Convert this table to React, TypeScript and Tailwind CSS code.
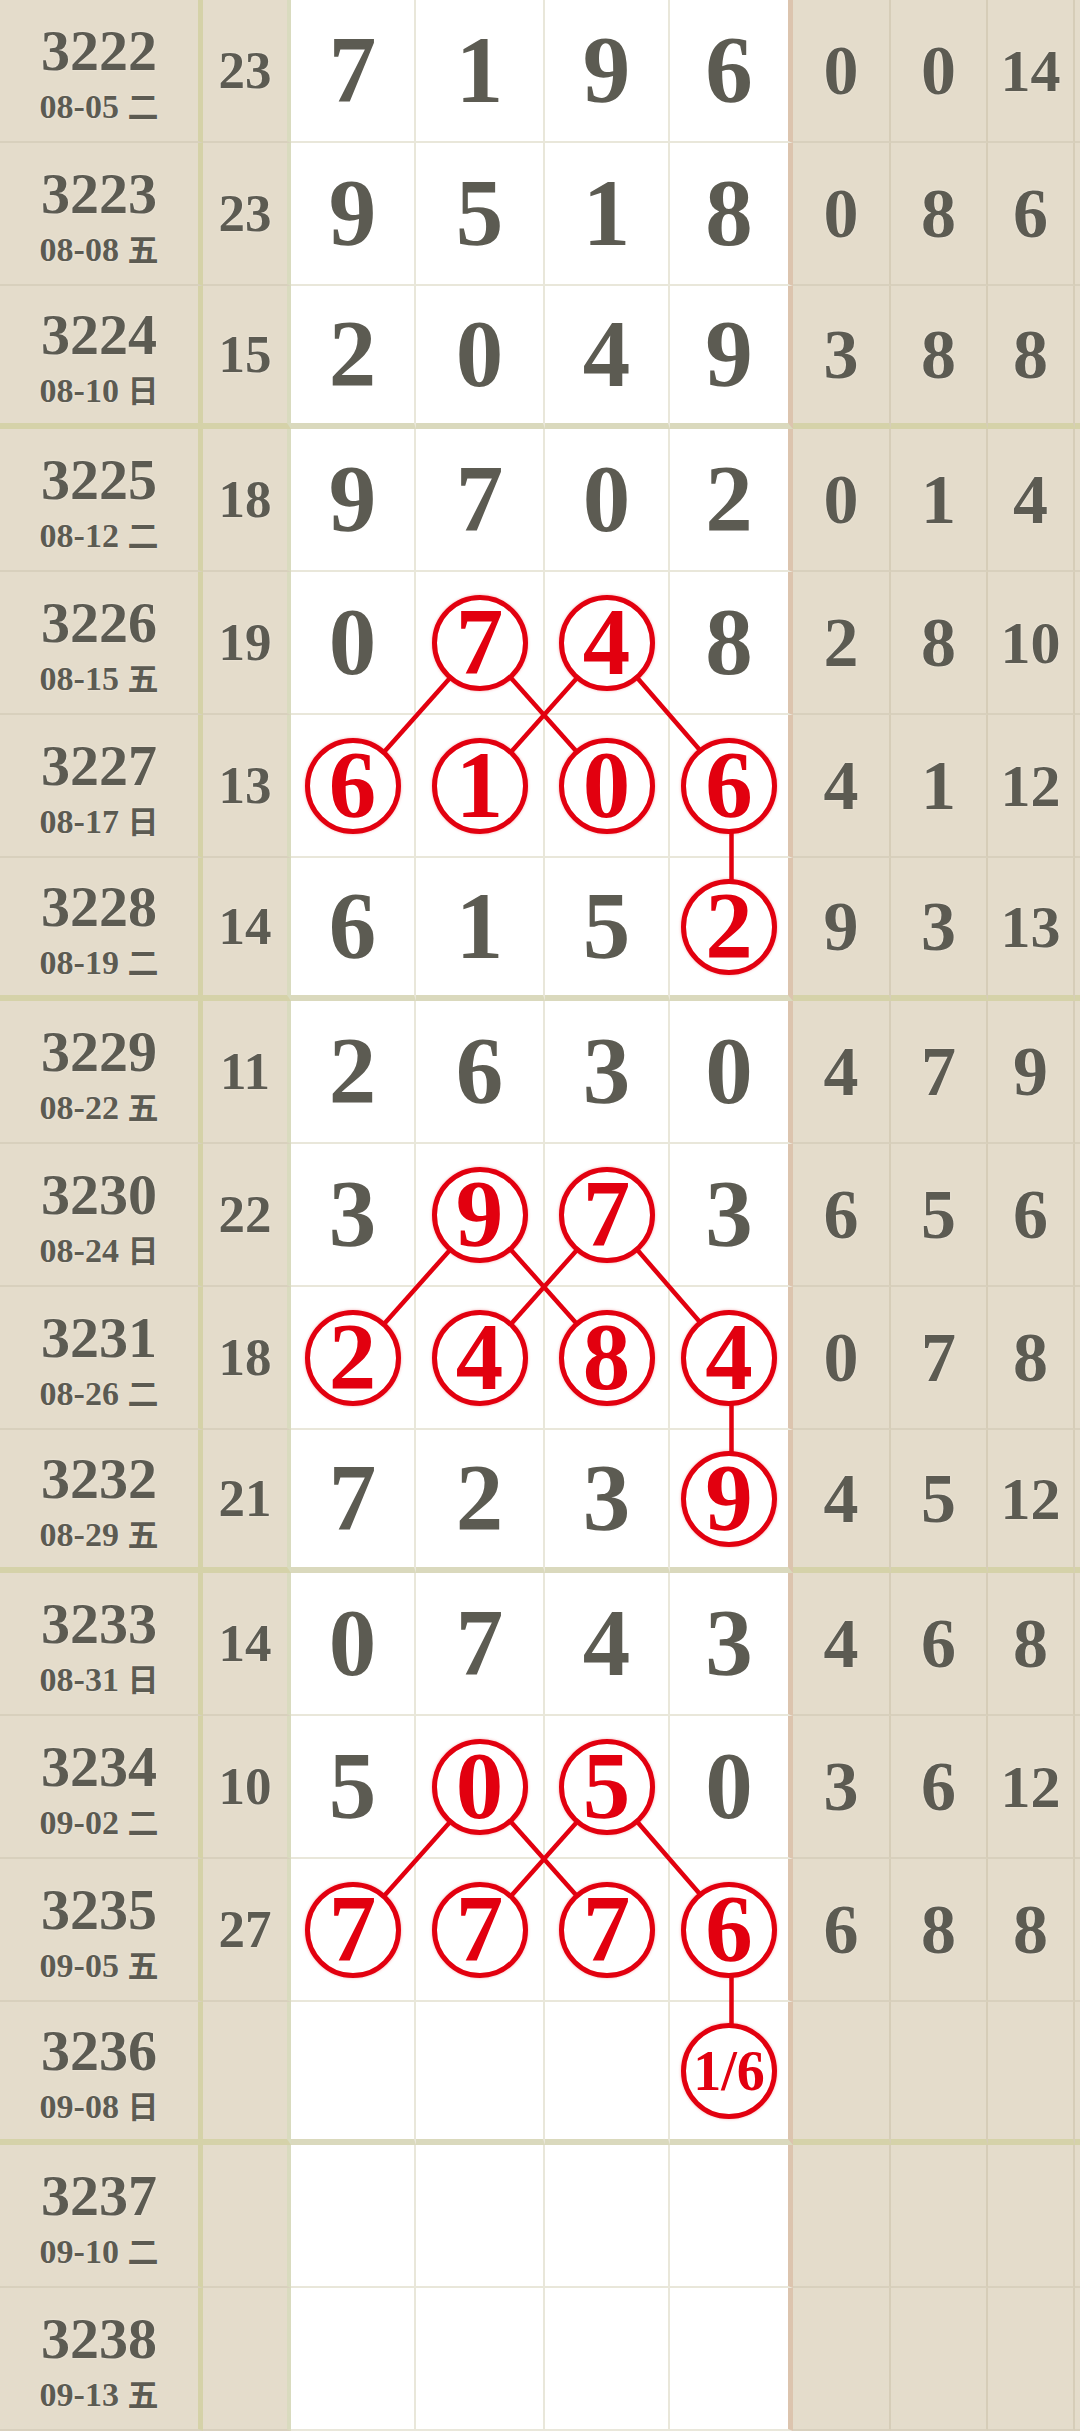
import React from 'react';

type Row = [string, string, string, string, string[], string[]];

// period, date, weekday, sum, four digits ('*' = circled), three right-hand stats
const rows: Row[] = [
  ['3222', '08-05', '二', '23', ['7', '1', '9', '6'], ['0', '0', '14']],
  ['3223', '08-08', '五', '23', ['9', '5', '1', '8'], ['0', '8', '6']],
  ['3224', '08-10', '日', '15', ['2', '0', '4', '9'], ['3', '8', '8']],
  ['3225', '08-12', '二', '18', ['9', '7', '0', '2'], ['0', '1', '4']],
  ['3226', '08-15', '五', '19', ['0', '*7', '*4', '8'], ['2', '8', '10']],
  ['3227', '08-17', '日', '13', ['*6', '*1', '*0', '*6'], ['4', '1', '12']],
  ['3228', '08-19', '二', '14', ['6', '1', '5', '*2'], ['9', '3', '13']],
  ['3229', '08-22', '五', '11', ['2', '6', '3', '0'], ['4', '7', '9']],
  ['3230', '08-24', '日', '22', ['3', '*9', '*7', '3'], ['6', '5', '6']],
  ['3231', '08-26', '二', '18', ['*2', '*4', '*8', '*4'], ['0', '7', '8']],
  ['3232', '08-29', '五', '21', ['7', '2', '3', '*9'], ['4', '5', '12']],
  ['3233', '08-31', '日', '14', ['0', '7', '4', '3'], ['4', '6', '8']],
  ['3234', '09-02', '二', '10', ['5', '*0', '*5', '0'], ['3', '6', '12']],
  ['3235', '09-05', '五', '27', ['*7', '*7', '*7', '*6'], ['6', '8', '8']],
  ['3236', '09-08', '日', '', ['', '', '', '*1/6'], ['', '', '']],
  ['3237', '09-10', '二', '', ['', '', '', ''], ['', '', '']],
  ['3238', '09-13', '五', '', ['', '', '', ''], ['', '', '']],
];

const ROW_H = 143;
const colX = [353.5, 480.5, 607.5, 731.5];
const R = 46;

const links: number[][] = [];
[4, 8, 12].forEach(r => {
  links.push([r, 1, r + 1, 0], [r, 1, r + 1, 2], [r, 2, r + 1, 1], [r, 2, r + 1, 3], [r + 1, 3, r + 2, 3]);
});

const serif = "font-['Liberation_Serif','Noto_Sans_CJK_SC',serif] font-bold";
const halo = '[text-shadow:0_0_2px_#f6f0e8]';

const App: React.FC = () => {
  return (
    <div className={`relative w-[1080px] overflow-hidden bg-[#e4dccb] text-[#5c5b52] ${serif}`}>
      <div className="grid grid-cols-[203px_88px_125px_129px_125px_123px_98px_97px_87px_5px] auto-rows-[143px]">
        {rows.map((row, i) => {
          const [id, date, wd, sum, nums, right] = row;
          const thick = i === 2 || i === 6 || i === 10 || i === 14;
          const bBeige = thick ? 'border-b-[6px] border-b-[#d5d2a9]' : 'border-b-2 border-b-[#d8d0bd]';
          const bWhite = thick ? 'border-b-[6px] border-b-[#dad9bd]' : 'border-b-2 border-b-[#e9e7da]';
          return (
            <React.Fragment key={id}>
              <div className={`flex flex-col items-center justify-center border-r-[5px] border-r-[#d5d2a8] ${bBeige} ${halo}`}>
                <span className="mt-[4px] text-[58px] leading-none">{id}</span>
                <span className="mt-[9px] text-[34px] leading-none">
                  {date} <span className="font-['Noto_Sans_CJK_SC',sans-serif] text-[31px]">{wd}</span>
                </span>
              </div>
              <div className={`flex items-center justify-center border-r-4 border-r-[#d9dbbf] text-[53px] leading-none ${bBeige} ${halo}`}>
                {sum}
              </div>
              {nums.map((n, j) => (
                <div
                  key={j}
                  className={`flex items-center justify-center bg-white ${bWhite} ${
                    j === 3 ? 'border-r-[5px] border-r-[#dcc4ae]' : 'border-r-2 border-r-[#e9e7da]'
                  }`}
                >
                  {n.startsWith('*') ? (
                    <span
                      className={`relative z-10 flex h-[96px] w-[96px] items-center justify-center rounded-full border-[5px] border-[#e2000f] bg-white leading-none text-[#e2000f] shadow-[0_0_3px_rgba(230,0,20,0.35)] ${
                        n.length > 2 ? 'text-[56px]' : 'text-[95px]'
                      }`}
                    >
                      {n.slice(1)}
                    </span>
                  ) : (
                    <span className="text-[95px] leading-none">{n}</span>
                  )}
                </div>
              ))}
              {right.map((v, j) => (
                <div
                  key={j}
                  className={`flex items-center justify-center border-r-2 border-r-[#d6cdb8] leading-none ${bBeige} ${halo} ${
                    v.length > 1 ? 'text-[60px]' : 'text-[70px]'
                  }`}
                >
                  {v}
                </div>
              ))}
              <div className={bBeige} />
            </React.Fragment>
          );
        })}
      </div>

      <svg className="pointer-events-none absolute left-0 top-0" width={1080} height={rows.length * ROW_H}>
        {links.map(([r1, c1, r2, c2], k) => {
          const x1 = colX[c1];
          const y1 = r1 * ROW_H + 71.5;
          const x2 = colX[c2];
          const y2 = r2 * ROW_H + 71.5;
          const len = Math.hypot(x2 - x1, y2 - y1);
          const ux = (x2 - x1) / len;
          const uy = (y2 - y1) / len;
          return (
            <line
              key={k}
              x1={x1 + ux * R}
              y1={y1 + uy * R}
              x2={x2 - ux * R}
              y2={y2 - uy * R}
              stroke="#e2000f"
              strokeWidth={4.5}
            />
          );
        })}
      </svg>
    </div>
  );
};

export default App;
